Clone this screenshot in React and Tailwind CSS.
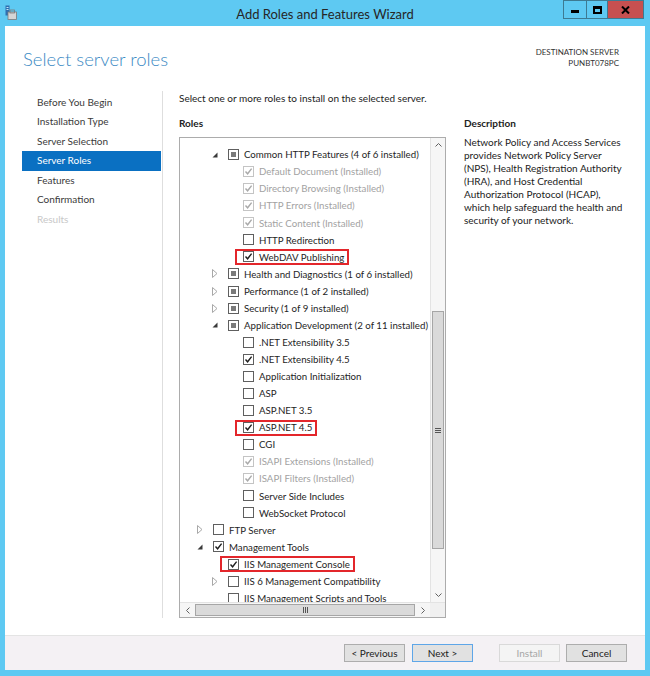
import React from "react";

const rows = [
  { lvl: "A", exp: "open", box: "mixed", label: "Common HTTP Features (4 of 6 installed)" },
  { lvl: "B", box: "installed", label: "Default Document (Installed)" },
  { lvl: "B", box: "installed", label: "Directory Browsing (Installed)" },
  { lvl: "B", box: "installed", label: "HTTP Errors (Installed)" },
  { lvl: "B", box: "installed", label: "Static Content (Installed)" },
  { lvl: "B", box: "off", label: "HTTP Redirection" },
  { lvl: "B", box: "on", label: "WebDAV Publishing", mark: true },
  { lvl: "A", exp: "closed", box: "mixed", label: "Health and Diagnostics (1 of 6 installed)" },
  { lvl: "A", exp: "closed", box: "mixed", label: "Performance (1 of 2 installed)" },
  { lvl: "A", exp: "closed", box: "mixed", label: "Security (1 of 9 installed)" },
  { lvl: "A", exp: "open", box: "mixed", label: "Application Development (2 of 11 installed)" },
  { lvl: "B", box: "off", label: ".NET Extensibility 3.5" },
  { lvl: "B", box: "on", label: ".NET Extensibility 4.5" },
  { lvl: "B", box: "off", label: "Application Initialization" },
  { lvl: "B", box: "off", label: "ASP" },
  { lvl: "B", box: "off", label: "ASP.NET 3.5" },
  { lvl: "B", box: "on", label: "ASP.NET 4.5", mark: true },
  { lvl: "B", box: "off", label: "CGI" },
  { lvl: "B", box: "installed", label: "ISAPI Extensions (Installed)" },
  { lvl: "B", box: "installed", label: "ISAPI Filters (Installed)" },
  { lvl: "B", box: "off", label: "Server Side Includes" },
  { lvl: "B", box: "off", label: "WebSocket Protocol" },
  { lvl: "C", exp: "closed", box: "off", label: "FTP Server" },
  { lvl: "C", exp: "open", box: "on", label: "Management Tools" },
  { lvl: "A", box: "on", label: "IIS Management Console", mark: true },
  { lvl: "A", exp: "closed", box: "off", label: "IIS 6 Management Compatibility" },
  { lvl: "A", box: "off", label: "IIS Management Scripts and Tools" },
];

const indent = { C: "pl-[18px]", A: "pl-[33px]", B: "pl-[48px]" };

const steps = [
  "Before You Begin",
  "Installation Type",
  "Server Selection",
  "Server Roles",
  "Features",
  "Confirmation",
  "Results",
];

const Check = ({ color }) => (
  <svg width="9" height="9" viewBox="0 0 9 9">
    <path d="M1.5 4.5 L3.6 6.8 L7.6 1.6" fill="none" stroke={color} strokeWidth="1.4" />
  </svg>
);

const Box = ({ type }) => {
  if (type === "mixed") {
    return (
      <span className="w-[11px] h-[11px] shrink-0 border border-[#5f5f5f] bg-white flex items-center justify-center">
        <span className="w-[5px] h-[5px] bg-[#7a7a7a]" />
      </span>
    );
  }
  if (type === "installed") {
    return (
      <span className="w-[11px] h-[11px] shrink-0 border border-[#c4c4c4] bg-white flex items-center justify-center">
        <Check color="#a9a9a9" />
      </span>
    );
  }
  return (
    <span className="w-[11px] h-[11px] shrink-0 border border-[#5f5f5f] bg-white flex items-center justify-center">
      {type === "on" && <Check color="#1e1e1e" />}
    </span>
  );
};

const Expander = ({ exp }) => (
  <span className="w-[15px] h-[17px] shrink-0 flex items-center">
    {exp === "open" && (
      <svg width="6" height="6" viewBox="0 0 6 6" className="-ml-[1px]">
        <polygon points="5.5,0.5 5.5,5.5 0.5,5.5" fill="#3a3a3a" />
      </svg>
    )}
    {exp === "closed" && (
      <svg width="6" height="9" viewBox="0 0 6 9" className="-ml-[1px]">
        <polygon points="0.5,0.5 5,4.5 0.5,8.5" fill="none" stroke="#a8a8a8" />
      </svg>
    )}
  </span>
);

const TreeRow = ({ row }) => {
  const gray = row.box === "installed";
  const inner = (
    <>
      <Box type={row.box} />
      <span className={`ml-[5px] whitespace-nowrap ${gray ? "text-[#a2a2a2]" : "text-[#1e1e1e]"}`}>
        {row.label}
      </span>
    </>
  );
  return (
    <div className={`h-[17.07px] shrink-0 flex items-center ${indent[row.lvl]}`}>
      <Expander exp={row.exp} />
      {row.mark ? (
        <span className="h-[16px] flex items-center border-2 border-[#e3262b] -ml-[8px] pl-[6px] pr-[3px]">
          {inner}
        </span>
      ) : (
        inner
      )}
    </div>
  );
};

const Btn = ({ children, kind }) => {
  const cls =
    kind === "focus"
      ? "border-[#5ea6e8] bg-[#e1e1e1] text-[#222]"
      : kind === "disabled"
      ? "border-[#d9d9d9] bg-[#f4f4f4] text-[#a6a6a6]"
      : "border-[#adadad] bg-[#e1e1e1] text-[#222]";
  return (
    <div className={`w-[61px] h-[18px] border flex items-center justify-center text-[10px] ${cls}`}>
      {children}
    </div>
  );
};

export default function App() {
  return (
    <div className="w-[650px] h-[676px] bg-[#5ec9f2] flex flex-col font-['Lato','Liberation_Sans',sans-serif] overflow-hidden">
      {/* TITLE BAR */}
      <div className="h-[26px] shrink-0 grid grid-cols-[1fr_auto_1fr]">
        <div className="pl-[5px] pt-[5px]">
          <svg width="12" height="15" viewBox="0 0 12 15">
            <rect x="0.5" y="0.5" width="4" height="10" fill="#2f6fb0" />
            <rect x="1.5" y="2" width="2" height="1" fill="#bfe4f7" />
            <rect x="1.5" y="4" width="2" height="1" fill="#bfe4f7" />
            <rect x="3" y="7" width="8.5" height="7.5" fill="#d5d5d5" stroke="#7a7a7a" strokeWidth="0.8" />
            <rect x="5" y="5" width="4.5" height="3" fill="none" stroke="#7a7a7a" strokeWidth="0.8" />
          </svg>
        </div>
        <div className="text-[13px] text-[#262626] pt-[6px] leading-[16px]">
          Add Roles and Features Wizard
        </div>
        <div className="flex justify-end pr-[6px]">
          <div className="w-[23px] h-[19px] border border-[#3d7a92] border-r-0 flex items-center justify-center">
            <span className="w-[8px] h-[3px] bg-black mt-[4px]" />
          </div>
          <div className="w-[22px] h-[19px] border border-[#3d7a92] flex items-center justify-center">
            <span className="w-[9px] h-[8px] border-2 border-black border-t-[3px]" />
          </div>
          <div className="w-[36px] h-[19px] border border-[#3d7a92] border-l-0 bg-[#c75050] flex items-center justify-center">
            <svg width="9" height="8" viewBox="0 0 9 8">
              <path d="M1 0.5 L8 7.5 M8 0.5 L1 7.5" stroke="black" strokeWidth="2" />
            </svg>
          </div>
        </div>
      </div>

      {/* WHITE BODY */}
      <div className="flex-1 mx-[5px] mb-[7px] bg-white flex flex-col">
        {/* HEADER */}
        <div className="h-[65px] shrink-0 flex justify-between">
          <h1 className="pl-[18px] pt-[23px] text-[18.5px] leading-[20px] font-light text-[#3b8ac4]">
            Select server roles
          </h1>
          <div className="pr-[26px] pt-[21px] text-right text-[8px] leading-[11px] text-[#333]">
            <div>DESTINATION SERVER</div>
            <div>PUNBT078PC</div>
          </div>
        </div>

        {/* MAIN */}
        <div className="flex-1 flex pb-[17px]">
          {/* NAV */}
          <div className="ml-[17px] w-[139px] pt-[1.5px] text-[10px]">
            {steps.map((s, i) => (
              <div
                key={s}
                className={`h-[19.5px] flex items-center pl-[15px] ${
                  i === 3
                    ? "bg-[#0a70c2] text-white"
                    : i === 6
                    ? "text-[#c8c8c8]"
                    : "text-[#3a3a3a]"
                }`}
              >
                {s}
              </div>
            ))}
          </div>
          <div className="ml-[1px] w-[1px] bg-[#dedede]" />

          {/* ROLES */}
          <div className="pl-[16px] w-[283px] shrink-0 text-[10px] flex flex-col">
            <div className="leading-[14px] text-[#222] whitespace-nowrap">
              Select one or more roles to install on the selected server.
            </div>
            <div className="mt-[11px] leading-[14px] font-bold text-[#222]">Roles</div>
            <div className="mt-[7px] w-[267px] h-[481px] border border-[#acacac] flex flex-col">
              <div className="flex-1 flex min-h-0">
                <div className="flex-1 overflow-hidden flex flex-col pt-[8px] text-[9.7px]">
                  {rows.map((r) => (
                    <TreeRow key={r.label} row={r} />
                  ))}
                </div>
                {/* vertical scrollbar */}
                <div className="w-[15px] flex flex-col bg-[#f6f6f6] border-l border-[#e3e3e3]">
                  <div className="h-[14px] flex items-center justify-center">
                    <svg width="7" height="4" viewBox="0 0 7 4">
                      <path d="M0.5 3.5 L3.5 0.5 L6.5 3.5" fill="none" stroke="#606060" />
                    </svg>
                  </div>
                  <div className="h-[159px]" />
                  <div className="h-[238px] mx-[1px] bg-[#dadada] border border-[#a6a6a6] flex items-center justify-center">
                    <div className="flex flex-col gap-[1px]">
                      <span className="w-[6px] h-[1px] bg-[#555]" />
                      <span className="w-[6px] h-[1px] bg-[#555]" />
                      <span className="w-[6px] h-[1px] bg-[#555]" />
                    </div>
                  </div>
                  <div className="flex-1" />
                  <div className="h-[14px] flex items-center justify-center">
                    <svg width="7" height="4" viewBox="0 0 7 4">
                      <path d="M0.5 0.5 L3.5 3.5 L6.5 0.5" fill="none" stroke="#606060" />
                    </svg>
                  </div>
                </div>
              </div>
              {/* horizontal scrollbar */}
              <div className="h-[15px] shrink-0 flex bg-[#f6f6f6] border-t border-[#e3e3e3]">
                <div className="w-[15px] flex items-center justify-center">
                  <svg width="4" height="7" viewBox="0 0 4 7">
                    <path d="M3.5 0.5 L0.5 3.5 L3.5 6.5" fill="none" stroke="#606060" />
                  </svg>
                </div>
                <div className="flex-1 my-[1px] bg-[#dadada] border border-[#a6a6a6] flex items-center justify-center">
                  <div className="flex gap-[1px]">
                    <span className="w-[1px] h-[6px] bg-[#555]" />
                    <span className="w-[1px] h-[6px] bg-[#555]" />
                    <span className="w-[1px] h-[6px] bg-[#555]" />
                  </div>
                </div>
                <div className="w-[15px] flex items-center justify-center">
                  <svg width="4" height="7" viewBox="0 0 4 7">
                    <path d="M0.5 0.5 L3.5 3.5 L0.5 6.5" fill="none" stroke="#606060" />
                  </svg>
                </div>
                <div className="w-[15px] bg-[#f0f0f0]" />
              </div>
            </div>
          </div>

          {/* DESCRIPTION */}
          <div className="pl-[18px] pt-[25px] text-[10px] text-[#222] whitespace-nowrap">
            <div className="leading-[14px] font-bold">Description</div>
            <p className="mt-[6px] leading-[13px]">
              Network Policy and Access Services
              <br />
              provides Network Policy Server
              <br />
              (NPS), Health Registration Authority
              <br />
              (HRA), and Host Credential
              <br />
              Authorization Protocol (HCAP),
              <br />
              which help safeguard the health and
              <br />
              security of your network.
            </p>
          </div>
        </div>

        {/* FOOTER */}
        <div className="h-[35px] shrink-0 bg-[#f4f1f4] border-t border-[#e4e4e4] flex justify-end pt-[8px] pr-[18px]">
          <Btn>&lt; Previous</Btn>
          <div className="ml-[7px]">
            <Btn kind="focus">Next &gt;</Btn>
          </div>
          <div className="ml-[26px]">
            <Btn kind="disabled">Install</Btn>
          </div>
          <div className="ml-[6px]">
            <Btn>Cancel</Btn>
          </div>
        </div>
      </div>
    </div>
  );
}
